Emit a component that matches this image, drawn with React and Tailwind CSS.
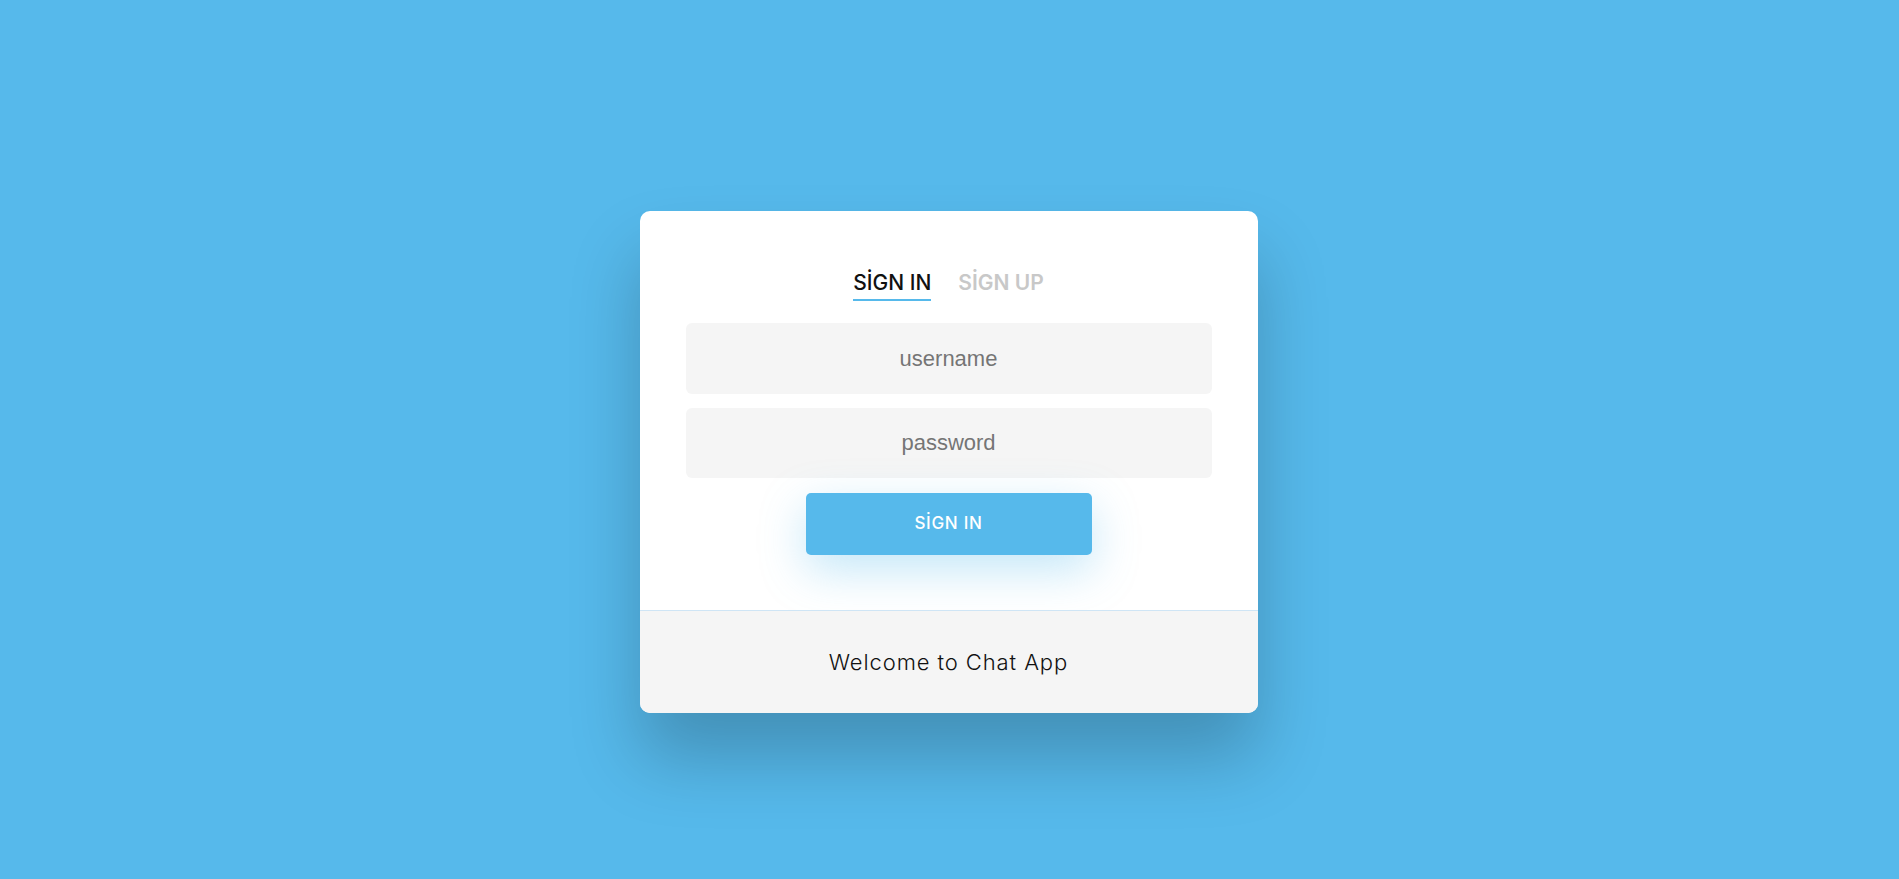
export default function App() {
  return (
    <div className="min-h-[879px] w-full bg-[#56b9eb] flex justify-center pt-[211px] pr-[2px]" style={{ fontFamily: "Inter, 'Open Sans', sans-serif" }}>
      <div className="w-[618px] h-[502px] bg-white rounded-[10px] overflow-hidden flex flex-col shadow-[0_45px_70px_rgba(0,0,0,0.22)]">
        <div className="flex flex-col items-center px-[46px] pt-[58px] pb-[55px]">
          <div className="flex gap-[27px] text-[21px] leading-[28px] font-medium">
            <span className="text-[#111] border-b-2 border-[#56b9eb] pb-[2px]">SİGN IN</span>
            <span className="text-[#c8c8c8] font-semibold pb-[4px]">SİGN UP</span>
          </div>
          <input
            type="text"
            placeholder="username"
            className="mt-[22px] w-full h-[71px] bg-[#f5f5f5] rounded-[6px] text-center text-[22px] text-[#333] placeholder-[#757575] outline-none"
            style={{ fontFamily: "'Liberation Sans', Arial, sans-serif" }}
          />
          <input
            type="password"
            placeholder="password"
            className="mt-[14px] w-full h-[70px] bg-[#f5f5f5] rounded-[6px] text-center text-[22px] text-[#333] placeholder-[#757575] outline-none"
            style={{ fontFamily: "'Liberation Sans', Arial, sans-serif" }}
          />
          <button className="mt-[15px] w-[286px] h-[62px] bg-[#56b9eb] rounded-[5px] text-white text-[17px] tracking-[0.7px] font-medium shadow-[0_15px_45px_rgba(86,185,235,0.35)]">
            SİGN IN
          </button>
        </div>
        <div className="flex-1 border-t border-[#cfe5f5] bg-[#f5f5f5] flex items-center justify-center">
          <span className="text-[22px] tracking-[0.9px] text-[#111] font-light">Welcome to Chat App</span>
        </div>
      </div>
    </div>
  );
}
